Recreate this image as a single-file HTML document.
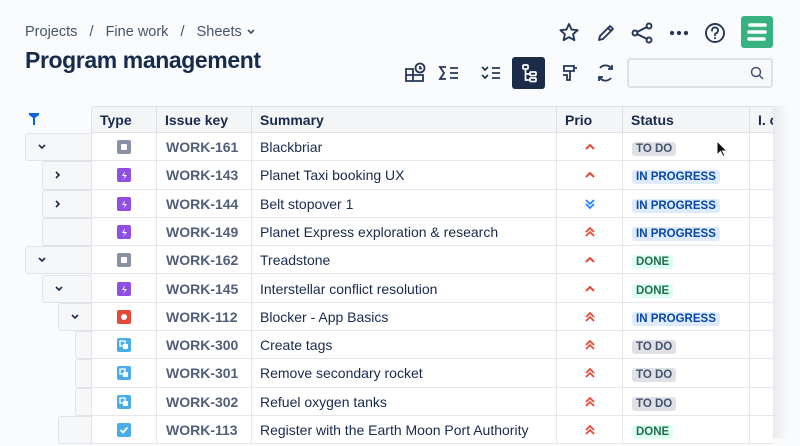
<!DOCTYPE html><html><head><style>
body{margin:0;width:800px;height:438px;overflow:hidden;background:#fafbfc;font-family:"Liberation Sans",sans-serif;position:relative;color:#172b4d}
.a{position:absolute}
.crumb{left:25px;top:24px;font-size:14.5px;color:#44546f}
h1{position:absolute;left:25px;top:47px;margin:0;font-size:23px;font-weight:bold;color:#172b4d;letter-spacing:-0.4px}
.hdr{position:absolute;top:106px;height:27px;background:#f4f5f7;border-right:1px solid #dfe1e6;border-bottom:1px solid #dfe1e6;border-top:1px solid #dfe1e6;box-sizing:border-box;font-weight:bold;font-size:14px;line-height:26px;padding-left:8px}
.row{position:absolute;left:91px;width:682px;height:28.3px;background:#fff;border-bottom:1px solid #e4e6ea;box-sizing:border-box}
.c{position:absolute;top:0;height:100%;border-right:1px solid #e4e6ea;box-sizing:border-box;font-size:14px;line-height:28px}
.tree{position:absolute;height:28.3px;background:#f6f7f9;border:1px solid #e1e3e7;border-right:none;box-sizing:border-box;border-radius:3px 0 0 3px}
.ti{position:absolute;left:25px;width:14px;height:14px;border-radius:2px;top:7px}
.ti svg{display:block;position:absolute;left:0;top:0}
.key{left:66px;width:95px;padding-left:9px;color:#505f79;font-weight:bold}
.sum{left:161px;width:305px;padding-left:8px;color:#172b4d}
.pr{left:466px;width:66px}
.pr svg{position:absolute;left:27px;top:8px;display:block}
.st{left:532px;width:127px;padding-left:9px}
.lz{font-size:11.5px;font-weight:bold;padding:1px 4px;border-radius:3px}
.todo{background:#dfe1e6;color:#44546f}.ip{background:#deebff;color:#0747a6}.dn{background:#dcfff1;color:#216e4e}
</style></head><body>
<div class="a crumb">Projects&nbsp;&nbsp; /&nbsp;&nbsp; Fine work&nbsp;&nbsp; /&nbsp;&nbsp; Sheets <svg width="10" height="8" viewBox="0 0 10 8"><path d="M2 2l3 3 3-3" stroke="#44546f" stroke-width="1.8" fill="none"/></svg></div>
<h1>Program management</h1>
<svg class="a" style="left:558px;top:21px" width="170" height="24" viewBox="0 0 170 24" fill="none" stroke="#253858" stroke-width="1.9" stroke-linejoin="round" stroke-linecap="round">
<path d="M11 3l2.6 5.6 6 .6-4.5 4 1.3 6L11 16.2 5.6 19.2l1.3-6-4.5-4 6-.6z"/>
<path d="M41 19l1-4 10-10 3 3-10 10z M50 7l3 3"/>
<circle cx="77" cy="12" r="2.5"/><circle cx="91" cy="5" r="2.5"/><circle cx="91" cy="19" r="2.5"/><path d="M79 11l10-5M79 13l10 5"/>
<circle cx="114" cy="12" r="1.2" fill="#253858"/><circle cx="121" cy="12" r="1.2" fill="#253858"/><circle cx="128" cy="12" r="1.2" fill="#253858"/>
<circle cx="157" cy="12" r="9"/><path d="M154 9.5a3 3 0 1 1 4 2.8c-1 .4-1 1-1 2M157 17v.3"/>
</svg>
<div class="a" style="left:741px;top:16px;width:32px;height:32px;background:#36b37e;border-radius:3px"></div>
<svg class="a" style="left:741px;top:16px" width="32" height="32" viewBox="0 0 32 32" stroke="#fff" stroke-width="3.6" stroke-linecap="round"><path d="M9 9h15M8 16h16M8 23h15"/></svg>
<svg class="a" style="left:404px;top:61px" width="220" height="24" viewBox="0 0 220 24" fill="none" stroke="#253858" stroke-width="1.8">
<path d="M2 8h7v12H2zM2 14h7M9 14h10v6H9"/><circle cx="16" cy="7" r="4.5"/><path d="M16 5v2.5h2"/>
<path d="M42 6h-6l4 6-4 6h6M46 7h8M46 12h8M46 17h8"/>
<path d="M78 6l3 3 3-3M78 14l3 3 3-3M88 7h8M88 12h8M88 17h8"/>
<path d="M160 5h10v5h-10zM170 7h3M166 10v9h-3v-5h-4" />
<path d="M196 7a7 7 0 0 1 10-1l2 2M207 17a7 7 0 0 1-10 1l-2-2M208 4v4h-4M195 20v-4h4"/>
</svg>
<div class="a" style="left:512px;top:57px;width:33px;height:32px;background:#1d2b4a;border-radius:3px"></div>
<svg class="a" style="left:512px;top:57px" width="33" height="32" viewBox="0 0 33 32" fill="none" stroke="#fff" stroke-width="1.7"><rect x="11" y="8" width="5" height="4" rx="1"/><rect x="18" y="15" width="6" height="3.5" rx="1"/><rect x="18" y="21" width="6" height="3.5" rx="1"/><path d="M13.5 12v11h4.5M13.5 17h4.5"/></svg>
<div class="a" style="left:627px;top:58px;width:146px;height:30px;background:#f7f8f9;border:2px solid #dfe1e6;border-radius:3px;box-sizing:border-box"></div>
<svg class="a" style="left:750px;top:66px" width="14" height="14" viewBox="0 0 14 14" fill="none" stroke="#44546f" stroke-width="1.5"><circle cx="6" cy="6" r="4.5"/><path d="M9.5 9.5l3.5 3.5"/></svg>
<svg class="a" style="left:29px;top:113px" width="10" height="12" viewBox="0 0 10 12"><path d="M0 0h10v2L6 5v7H4V5L0 2z" fill="#0c66e4"/></svg>
<div class="hdr" style="left:91px;width:66px;border-left:1px solid #dfe1e6;border-radius:4px 0 0 0">Type</div>
<div class="hdr" style="left:157px;width:95px">Issue key</div>
<div class="hdr" style="left:252px;width:305px">Summary</div>
<div class="hdr" style="left:557px;width:66px">Prio</div>
<div class="hdr" style="left:623px;width:127px">Status</div>
<div class="hdr" style="left:750px;width:23px;border-right:none;overflow:hidden;white-space:nowrap">I. c</div>
<div id="rows"></div>
<div class="a" style="left:773px;top:106px;width:27px;height:332px;background:linear-gradient(90deg,#e8eaee,#fafbfc 60%)"></div>
<svg class="a" style="left:716px;top:140px" width="12" height="18" viewBox="0 0 12 18"><path d="M1 1v14l3.5-3.5 2.5 5 2-1-2.5-4.5H11z" fill="#111" stroke="#fff" stroke-width="1"/></svg>
<script>
var up='<svg width="12" height="12" viewBox="0 0 12 12"><path d="M2 8l4-4 4 4" stroke="#e5493a" stroke-width="2" fill="none"/></svg>';
var hi='<svg width="12" height="12" viewBox="0 0 12 12"><path d="M2 6l4-4 4 4M2 10l4-4 4 4" stroke="#e5493a" stroke-width="1.8" fill="none"/></svg>';
var lo='<svg width="12" height="12" viewBox="0 0 12 12"><path d="M2 2l4 4 4-4M2 6l4 4 4-4" stroke="#2684ff" stroke-width="1.8" fill="none"/></svg>';
var T={g:'<div class="ti" style="background:#8993a4"><div style="position:absolute;left:4px;top:4px;width:6px;height:6px;background:#fff;border-radius:1px"></div></div>',
p:'<div class="ti" style="background:#904ee2"><svg width="14" height="14"><path d="M8 3L5 8h3l-2 4 4-5H7z" fill="#fff"/></svg></div>',
r:'<div class="ti" style="background:#e5493a"><div style="position:absolute;left:4px;top:4px;width:6px;height:6px;background:#fff;border-radius:50%"></div></div>',
b:'<div class="ti" style="background:#4bade8"><svg width="14" height="14"><rect x="3" y="3" width="5" height="5" fill="none" stroke="#fff" stroke-width="1.3"/><rect x="6" y="6" width="5" height="5" fill="#fff"/></svg></div>',
c:'<div class="ti" style="background:#4bade8"><svg width="14" height="14"><path d="M3.5 7l2.5 2.5 4.5-5" stroke="#fff" stroke-width="1.8" fill="none"/></svg></div>'};
var R=[[0,'v','g','161','Blackbriar',up,'todo','TO DO'],[1,'>','p','143','Planet Taxi booking UX',up,'ip','IN PROGRESS'],[1,'>','p','144','Belt stopover 1',lo,'ip','IN PROGRESS'],[1,'','p','149','Planet Express exploration &amp; research',hi,'ip','IN PROGRESS'],[0,'v','g','162','Treadstone',up,'dn','DONE'],[1,'v','p','145','Interstellar conflict resolution',up,'dn','DONE'],[2,'v','r','112','Blocker - App Basics',hi,'ip','IN PROGRESS'],[3,'','b','300','Create tags',hi,'todo','TO DO'],[3,'','b','301','Remove secondary rocket',hi,'todo','TO DO'],[3,'','b','302','Refuel oxygen tanks',hi,'todo','TO DO'],[2,'','c','113','Register with the Earth Moon Port Authority',hi,'dn','DONE']];
var lx=[25,42,58,75],h='';
R.forEach(function(r,i){var t=133+i*28.3;var x=lx[r[0]];
h+='<div class="tree" style="left:'+x+'px;width:'+(91-x)+'px;top:'+t+'px"></div>';
if(r[1]=='v')h+='<svg class="a" style="left:'+(x+12)+'px;top:'+(t+10)+'px" width="10" height="8" viewBox="0 0 10 8"><path d="M2 2l3 3 3-3" stroke="#172b4d" stroke-width="1.6" fill="none"/></svg>';
if(r[1]=='>')h+='<svg class="a" style="left:'+(x+12)+'px;top:'+(t+9)+'px" width="8" height="10" viewBox="0 0 8 10"><path d="M2 2l3 3-3 3" stroke="#172b4d" stroke-width="1.6" fill="none"/></svg>';
h+='<div class="row" style="top:'+t+'px"><div class="c" style="left:0;width:66px;border-left:1px solid #e4e6ea">'+T[r[2]]+'</div><div class="c key">WORK-'+r[3]+'</div><div class="c sum">'+r[4]+'</div><div class="c pr">'+r[5]+'</div><div class="c st"><span class="lz '+r[6]+'">'+r[7]+'</span></div></div>';});
document.getElementById('rows').innerHTML=h;
</script>
</body></html>
